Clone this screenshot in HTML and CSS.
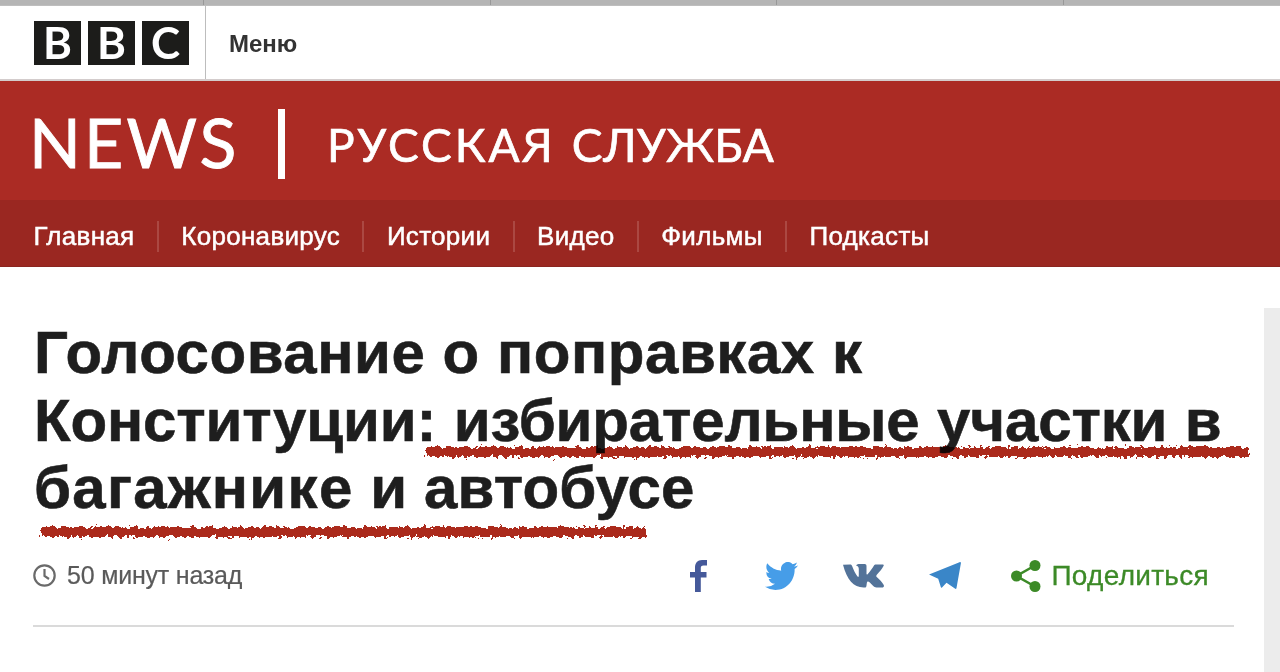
FILE: index.html
```html
<!DOCTYPE html>
<html lang="ru">
<head>
    <meta charset="UTF-8">
    <meta name="viewport" content="width=device-width, initial-scale=1.0">
    <title>BBC News Русская служба</title>
    <link rel="stylesheet" href="styles.css">
</head>
<body>
    <div class="tab-strip">
        <span></span><span></span><span></span><span></span><span></span>
    </div>

    <header class="top-bar">
        <a class="bbc-logo">
            <span>B</span>
            <span>B</span>
            <span>C</span>
        </a>
        <a class="menu-link">Меню</a>
    </header>

    <div class="brand">
        <span class="brand-news">NEWS</span>
        <span class="brand-line"></span>
        <span class="brand-service"><span class="word-one">РУССКАЯ</span> <span class="word-two">СЛУЖБА</span></span>
    </div>

    <nav class="main-nav">
        <a>Главная</a>
        <a>Коронавирус</a>
        <a>Истории</a>
        <a>Видео</a>
        <a>Фильмы</a>
        <a>Подкасты</a>
    </nav>

    <div class="page">
        <main class="story">
            <h1>
                <span class="row-one">Голосование о поправках к</span>
                <span class="row-two">Конституции: избирательные участки в</span>
                <span class="row-three"><em>багажнике</em> и автобусе</span>
                <svg class="marker marker-top" width="835" height="20">
                    <defs>
                        <filter id="chalk" x="-2%" y="-50%" width="104%" height="200%">
                            <feTurbulence type="fractalNoise" baseFrequency="0.25" numOctaves="2" seed="4" result="noise"/>
                            <feDisplacementMap in="SourceGraphic" in2="noise" scale="9" xChannelSelector="R" yChannelSelector="G"/>
                        </filter>
                    </defs>
                    <g filter="url(#chalk)">
                        <rect x="6" y="5" width="823" height="10"/>
                    </g>
                </svg>
                <svg class="marker marker-bottom" width="618" height="20">
                    <g filter="url(#chalk)">
                        <rect x="6" y="5" width="605" height="10"/>
                    </g>
                </svg>
            </h1>

            <div class="story-info">
                <svg class="clock" width="23" height="23" viewBox="0 0 23 23">
                    <circle cx="11.5" cy="11.5" r="10.2"/>
                    <path d="M11.500 5v7l4.500 3"/>
                </svg>
                <span class="time">50 минут назад</span>

                <div class="share">
                    <svg class="facebook" width="17" height="32" viewBox="0 0 17 32">
                        <path d="M5 32V17.500H0V12h5V7.500C5 3 7.500 0 12 0h5v5.500h-3.500c-2.200 0-2.700 1-2.700 2.800V12H16.500v5.500h-5.700V32z"/>
                    </svg>
                    <svg class="twitter" width="33" height="28" viewBox="0 2.200 24 19.600" preserveAspectRatio="none">
                        <path d="M23.954 4.569a10 10 0 0 1-2.825.775 4.958 4.958 0 0 0 2.163-2.723c-.951.555-2.005.959-3.127 1.184a4.920 4.920 0 0 0-8.384 4.482C7.691 8.094 4.066 6.130 1.640 3.161a4.822 4.822 0 0 0-.666 2.475c0 1.710.870 3.213 2.188 4.096a4.904 4.904 0 0 1-2.228-.616v.061a4.923 4.923 0 0 0 3.946 4.827 4.996 4.996 0 0 1-2.212.085 4.937 4.937 0 0 0 4.604 3.417 9.868 9.868 0 0 1-6.102 2.105c-.390 0-.779-.023-1.170-.067a13.995 13.995 0 0 0 7.557 2.209c9.054 0 13.999-7.496 13.999-13.986 0-.209 0-.420-.015-.630a9.936 9.936 0 0 0 2.460-2.548z"/>
                    </svg>
                    <svg class="vk" width="41" height="24" viewBox="0 0 41 24">
                        <path d="M0 .8 7 .4C8 .4 8.600.8 9 1.800 10.500 6 12.500 10 14.500 12.500c1 1 1.300.2 1.300-1.500V5c0-2-.8-3-2.800-3.500C14 .4 15 0 17 0h4.500c1.500 0 2 .8 2 2.300v7.400c0 1 .6 1 1.300.2C27.500 7 29.500 4 31 1.500 31.500.7 32 .4 33 .4h6.500c1.300 0 1.500.6 1 1.600-1.500 3-4 6-6.700 8.700-.8 1-.7 1.600.2 2.500 2.500 2.300 5 4.800 6.600 7.500.9 1.600.2 2.800-1.600 2.800h-5.500c-1.500 0-2.300-.4-3.500-1.700l-3.200-3.400c-1.500-1.400-2.800-1.400-3 .8l-.3 2.300c-.2 1.700-.7 2-2 2C11 24 4 16 0 .8z"/>
                    </svg>
                    <svg class="telegram" width="32" height="27" viewBox="0 0 32 27">
                        <path d="M0 12.500 30.500.2c1-.4 1.600 0 1.400 1.100L27.500 26c-.2 1-.8 1.200-1.600.6l-8.400-5.800-4.500 4.700c-.6.600-1 .4-1.200-.4L9.200 16.800z"/>
                    </svg>
                    <a class="share-link">
                        <svg width="30" height="32" viewBox="0 0 30 32">
                            <circle cx="24" cy="5.500" r="5.500"/>
                            <circle cx="5.500" cy="16" r="5.500"/>
                            <circle cx="24" cy="26.500" r="5.500"/>
                            <path d="M24 5.500 5.500 16 24 26.500"/>
                        </svg>
                        <span>Поделиться</span>
                    </a>
                </div>
            </div>
        </main>
        <aside class="side"></aside>
    </div>
</body>
</html>
```

FILE: styles.css
```css
* {
    box-sizing: border-box;
}

body {
    margin: 0;
    height: 672px;
    overflow: hidden;
    display: flex;
    flex-direction: column;
    background-color: #ffffff;
    font-family: "Liberation Sans", Arial, sans-serif;
}

.tab-strip {
    display: grid;
    grid-template-columns: 204px 287px 286px 287px 1fr;
    height: 6px;
    background-color: #b5b5b5;
    border-bottom: 1px solid #bebebe;
}

.tab-strip span {
    border-right: 1px solid #989898;
}

.tab-strip span:last-child {
    border-right: none;
}

.top-bar {
    display: flex;
    height: 75px;
    border-bottom: 2px solid #d3cccc;
}

.bbc-logo {
    display: flex;
    gap: 7px;
    width: 206px;
    padding: 15px 0 0 34px;
    border-right: 1px solid #bdbdbd;
}

.bbc-logo span {
    width: 47px;
    height: 44px;
    background-color: #1c1c1a;
    color: #ffffff;
    font-family: Lato, sans-serif;
    font-size: 44px;
    font-weight: bold;
    line-height: 43px;
    text-align: center;
}

.menu-link {
    padding-left: 23px;
    color: #333333;
    font-size: 24px;
    font-weight: bold;
    line-height: 76px;
}

.brand {
    display: flex;
    align-items: center;
    height: 119px;
    padding-left: 29px;
    background-color: #ab2b24;
    color: #ffffff;
    font-family: Lato, sans-serif;
}

.brand-news {
    width: 249px;
    padding-top: 2px;
    font-size: 68px;
    letter-spacing: 3.1px;
    -webkit-text-stroke: 0.9px #ffffff;
}

.brand-line {
    width: 7px;
    height: 70px;
    margin-top: 6px;
    background-color: #ffffff;
}

.brand-service {
    display: flex;
    gap: 16px;
    margin: 8px 0 0 42px;
    font-size: 46px;
    -webkit-text-stroke: 0.7px #ffffff;
}

.word-one {
    letter-spacing: 2.9px;
}

.word-two {
    letter-spacing: 0.4px;
}

.main-nav {
    display: flex;
    align-items: center;
    height: 67px;
    padding: 6px 0 0 11px;
    background-color: #9a2721;
    border-bottom: 1px solid #8b2520;
}

.main-nav a {
    padding: 0 22.4px;
    border-left: 2px solid #ab4842;
    color: #ffffff;
    font-size: 26px;
    line-height: 31px;
    letter-spacing: 0.3px;
    -webkit-text-stroke: 0.5px #ffffff;
}

.main-nav a:first-child {
    border-left: none;
}

.page {
    display: flex;
    justify-content: space-between;
    flex: 1;
}

.story {
    width: 1201px;
    margin-left: 33px;
    padding-top: 52px;
}

.side {
    width: 16px;
    margin-top: 41px;
    background-color: #ececec;
}

h1 {
    position: relative;
    margin: 0;
    color: #1e1e1e;
    font-size: 60px;
    line-height: 67.5px;
    -webkit-text-stroke: 0.6px #1e1e1e;
}

h1 span {
    display: block;
    width: max-content;
    margin-left: 1px;
}

h1 em {
    font-style: normal;
    letter-spacing: 1.3px;
}

.row-one {
    letter-spacing: 0.55px;
}

.row-two {
    letter-spacing: -0.15px;
    word-spacing: 1px;
}

.row-three {
    letter-spacing: 0.1px;
}

/* hand drawn lines under the words */
.marker {
    position: absolute;
    fill: #ab2a1a;
    mix-blend-mode: multiply;
}

.marker-top {
    left: 387px;
    top: 123px;
}

.marker-bottom {
    left: 2px;
    top: 203px;
}

.story-info {
    display: flex;
    align-items: center;
    height: 105px;
    padding-top: 5px;
    border-bottom: 2px solid #dadada;
}

.clock {
    fill: none;
    stroke: #6a6a6a;
    stroke-width: 2.2;
}

.time {
    margin-left: 11px;
    color: #5a5a5a;
    font-size: 25px;
    letter-spacing: -0.2px;
    -webkit-text-stroke: 0.2px #5a5a5a;
}

.share {
    display: flex;
    align-items: center;
    margin-left: auto;
    padding-right: 25px;
}

.facebook {
    fill: #45599a;
}

.twitter {
    margin-left: 58px;
    fill: #469de8;
}

.vk {
    margin-left: 45px;
    fill: #537399;
}

.telegram {
    margin-left: 45px;
    fill: #3a86c8;
}

.share-link {
    display: flex;
    align-items: center;
    margin-left: 50px;
    color: #3c8a27;
    font-size: 28px;
    letter-spacing: 0.3px;
}

.share-link span {
    margin-left: 10px;
    -webkit-text-stroke: 0.3px #3c8a27;
}

.share-link svg {
    fill: #3c8a27;
}

.share-link path {
    fill: none;
    stroke: #3c8a27;
    stroke-width: 2.5;
}
```
